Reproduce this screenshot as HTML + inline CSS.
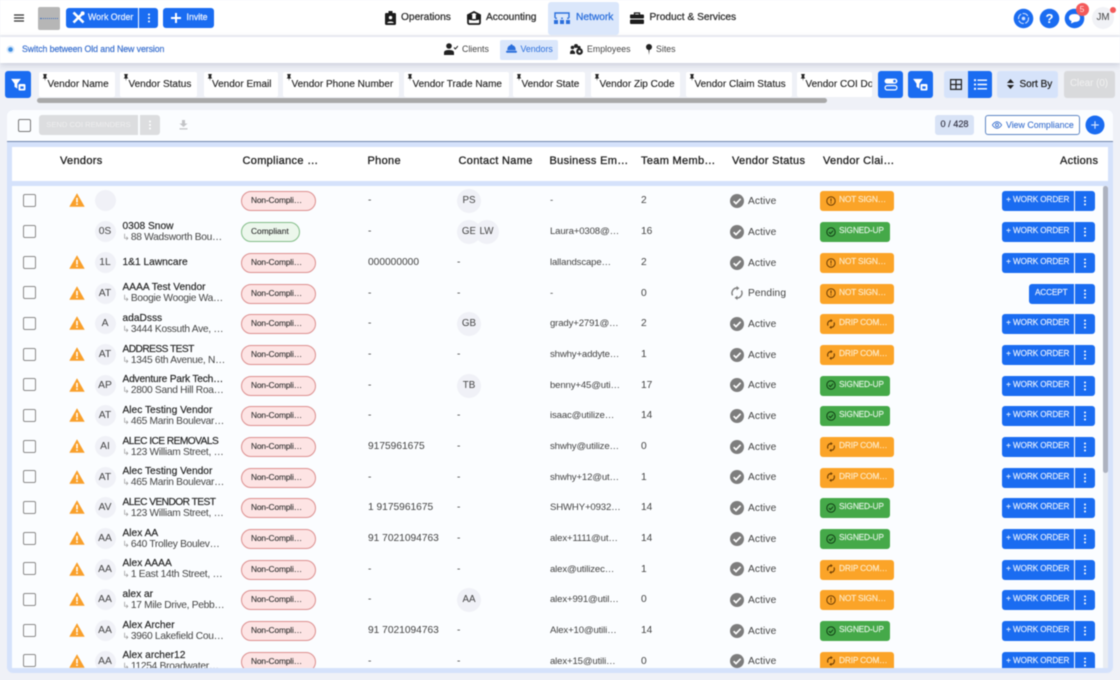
<!DOCTYPE html>
<html lang="en"><head><meta charset="utf-8"><title>Vendors</title>
<style>
*{box-sizing:border-box;margin:0;padding:0}
html,body{width:1120px;height:680px;overflow:hidden;background:#eff1f7;font-family:"Liberation Sans",Arial,sans-serif;color:#333}
#p{position:relative;width:1120px;height:680px;overflow:hidden;filter:blur(.4px)}
.a,.a *{position:absolute}
.a{left:0;top:0}
.t{white-space:nowrap;position:absolute}
.m{-webkit-text-stroke:.22px currentColor}
svg{display:block;position:absolute}
.b{background:#1a6cf1;border-radius:3px;position:absolute}
.n{font-size:10.2px;line-height:14px;top:10.5px;color:#2c2c2c;-webkit-text-stroke:.25px currentColor}
.s{font-size:8.8px;line-height:12px;top:43px;color:#444}
.c{position:absolute;top:72px;height:25px;background:#fff;border-radius:2px}
.c span{position:absolute;top:6px;left:8.5px;font-size:10px;line-height:14px;white-space:nowrap;color:#222;-webkit-text-stroke:.12px #222}
.c svg{left:3px;top:2px}
.h{position:absolute;top:154px;font-size:11px;line-height:14px;color:#1e1e1e;letter-spacing:.32px;-webkit-text-stroke:.3px #1e1e1e;white-space:nowrap}
.r{position:absolute;left:0;width:1120px;height:30px}
.r>*{position:absolute}
.k{left:23px;top:8.5px;width:13px;height:13px;border:1.5px solid #8b8b8b;border-radius:2px}
.w{left:69px;top:8px}
.v{left:94.5px;top:5px;width:21px;height:21px;border-radius:50%;background:#f0f1f7;font-size:10.3px;line-height:21px;text-align:center;color:#444}
.na{left:122.5px;top:3.5px;font-size:10.2px;line-height:13px;color:#222;white-space:nowrap;-webkit-text-stroke:.15px #222}
.u{letter-spacing:-.55px}
.ad{left:122.5px;top:14.5px;font-size:10.2px;line-height:13px;color:#444;white-space:nowrap;letter-spacing:-.28px}
.ad i{font-style:normal;color:#999;font-size:8.5px;margin-right:1.5px}
.o{left:122.5px;top:9px;font-size:10.2px;line-height:13px;color:#222;white-space:nowrap;-webkit-text-stroke:.15px #222}
.pl{left:241px;top:6px;height:20px;border-radius:10px;font-size:8.4px;line-height:16px;padding-left:9px;white-space:nowrap;color:#333;letter-spacing:-.15px;-webkit-text-stroke:.12px #333}
.no{width:75px;background:#fde4e4;border:1px solid #dc8f8f}
.ok{width:58.5px;background:#ecf7ec;border:1px solid #83bd88;letter-spacing:0}
.x{font-size:10.2px;line-height:30px;top:1px;color:#444;white-space:nowrap}
.e{left:550px;font-size:9.6px;letter-spacing:-.15px}
.cv{left:457px;top:4px;width:24px;height:24px;border-radius:50%;background:#f0f1f7;font-size:9.8px;line-height:24px;text-align:center;color:#444}
.si{left:730px;top:8.7px}
.st{left:748px;top:1.5px;font-size:10.2px;line-height:30px;color:#444;letter-spacing:.1px}
.cl{left:820px;top:6px;height:20px;border-radius:3px;width:74px;color:#fdeccd;font-size:8.4px;line-height:17px;padding-left:19px;white-space:nowrap;letter-spacing:-.2px;-webkit-text-stroke:.15px currentColor}
.cl svg{left:6px;top:4.5px}
.or{background:#fba428}
.gr{background:#45a949;width:69.5px;color:#e4f4e5}
.wo{left:1002px;top:6px;width:71.5px;height:20px;background:#1a6cf1;color:#e8f0ff;border-radius:3px 0 0 3px;font-size:8.2px;line-height:17px;text-align:center;white-space:nowrap;letter-spacing:-.1px;-webkit-text-stroke:.15px currentColor}
.ac{left:1029px;width:44.5px}
.mo{left:1075px;top:6px;width:19.5px;height:20px;background:#1a6cf1;border-radius:0 3px 3px 0}
.mo:after,.dot:after{content:"";position:absolute;left:50%;top:50%;width:2px;height:2px;margin:-1px;border-radius:50%;background:#fff;box-shadow:0 -3.5px #fff,0 3.5px #fff}
</style></head><body><div id="p">
<svg width="0" height="0" style="position:absolute"><defs>
<symbol id="warn" viewBox="0 0 16 14"><path d="M8 0.3 15.7 13.7H.3z" fill="#f9a02b"/><rect x="7.2" y="4.8" width="1.6" height="4.6" fill="#fff"/><rect x="7.2" y="10.3" width="1.6" height="1.6" fill="#fff"/></symbol>
<symbol id="act" viewBox="0 0 14 14"><circle cx="7" cy="7" r="7" fill="#7d7d7d"/><path d="M3.6 7.2 6 9.6 10.6 4.8" fill="none" stroke="#fff" stroke-width="1.6"/></symbol>
<symbol id="pend" viewBox="0 0 14 14"><path d="M7 2A5 5 0 0 0 2.6 9.4M7 12A5 5 0 0 0 11.4 4.6" fill="none" stroke="#7d7d7d" stroke-width="1.4"/><path d="M6.6 0 9.4 2.2 6.6 4.4zM7.4 14 4.6 11.8 7.4 9.6z" fill="#7d7d7d"/></symbol>
<symbol id="nots" viewBox="0 0 10 10"><circle cx="5" cy="5" r="4.2" fill="none" stroke="#6b3d05" stroke-width="1"/><rect x="4.5" y="2.4" width="1" height="3.2" fill="#6b3d05"/><rect x="4.5" y="6.3" width="1" height="1.1" fill="#6b3d05"/></symbol>
<symbol id="drip" viewBox="0 0 10 10"><path d="M5 1.6A3.4 3.4 0 0 0 2 6.6M5 8.4A3.4 3.4 0 0 0 8 3.4" fill="none" stroke="#6b3d05" stroke-width="1.1"/><path d="M4.6 0 6.8 1.6 4.6 3.2zM5.4 10 3.2 8.4 5.4 6.8z" fill="#6b3d05"/></symbol>
<symbol id="sign" viewBox="0 0 10 10"><circle cx="5" cy="5" r="4.2" fill="none" stroke="#123f16" stroke-width="1"/><path d="M2.9 5.1 4.4 6.6 7.2 3.7" fill="none" stroke="#123f16" stroke-width="1"/></symbol>
<symbol id="pin" viewBox="0 0 6 7"><path d="M1.2 0H4.8V.8L4.3 1.2V3.4L5.4 4.5H3.4L3 7 2.6 4.5H.6L1.7 3.4V1.2L1.2.8z" fill="#222"/></symbol>
<symbol id="fil" viewBox="0 0 16 14"><path d="M0 1H10.5L6.8 6V11.5L3.7 9.5V6z" fill="#fff"/><rect x="8" y="6.5" width="7.5" height="7" rx="1.3" fill="#fff"/><rect x="10" y="9" width="3.5" height="2.6" fill="#1a6cf1"/></symbol>
</defs></svg>

<!-- top bar -->
<div class="a" style="width:1120px;height:36px;background:#fff;border-bottom:1px solid #eceef2"></div>
<div class="a" style="top:37px;width:1120px;height:26px;background:#fff;box-shadow:0 2px 6px rgba(90,100,130,.25)"></div>
<svg style="left:14px;top:14px" width="10" height="8"><path d="M0 1H10M0 4H10M0 7H10" stroke="#333" stroke-width="1.2"/></svg>
<div style="position:absolute;left:38px;top:7px;width:22px;height:22.5px;background:#b6b6b6;border-radius:2px"><div style="position:absolute;left:2px;top:10.5px;width:18px;height:1px;border-top:1px dotted #3e6fc0"></div></div>
<div class="b" style="left:66px;top:8px;width:72px;height:20px;border-radius:3px 0 0 3px"></div>
<svg style="left:72px;top:11px" width="13" height="13" viewBox="0 0 13 13"><path d="M1.5 1.5 11.5 11.5M11.5 1.5 1.5 11.5" stroke="#fff" stroke-width="2.6"/><circle cx="10.6" cy="2.4" r="2" fill="#fff"/></svg>
<div class="t m" style="left:88px;top:11px;font-size:8.8px;line-height:13px;color:#eaf1ff">Work Order</div>
<div class="b dot" style="left:139px;top:8px;width:19px;height:20px;border-radius:0 3px 3px 0"></div>
<div class="b" style="left:163px;top:8px;width:51px;height:20px"></div>
<svg style="left:171px;top:13px" width="10" height="10"><path d="M5 0V10M0 5H10" stroke="#fff" stroke-width="2"/></svg>
<div class="t m" style="left:186.5px;top:11px;font-size:8.8px;line-height:13px;color:#eaf1ff">Invite</div>

<svg style="left:385px;top:11px" width="11" height="14" viewBox="0 0 11 14"><rect y="2" width="11" height="12" rx="1.2" fill="#1c1c1c"/><rect x="3.5" y="0" width="4" height="3.5" fill="#1c1c1c"/><circle cx="5.5" cy="6.6" r="1.7" fill="#fff"/><path d="M2.3 12c0-2 6.4-2 6.4 0z" fill="#fff"/></svg>
<div class="t n" style="left:401px">Operations</div>
<svg style="left:466.5px;top:11px" width="14" height="14" viewBox="0 0 14 14"><path d="M1 4 7 1 13 4V11.5Q13 13 11.5 13H2.500Q1 13 1 11.500z" fill="none" stroke="#1c1c1c" stroke-width="1.8"/><path d="M0 3.500H14V8Q7 11 0 8z" fill="#1c1c1c"/><rect x="5.200" y="3.500" width="3.600" height="4.500" fill="#fff"/></svg>
<div class="t n" style="left:486px">Accounting</div>
<div style="position:absolute;left:548px;top:2px;width:71px;height:33px;background:#dbe7fb;border-radius:3px"></div>
<svg style="left:554px;top:12px" width="16" height="12" viewBox="0 0 16 12"><path d="M1 6V1H15V6" fill="none" stroke="#2b6fdc" stroke-width="1.400"/><g fill="#2b6fdc"><rect x="0" y="8" width="4" height="4"/><rect x="6" y="8" width="4" height="4"/><rect x="12" y="8" width="4" height="4"/><rect x="1.200" y="5.500" width="1.600" height="1.600"/><rect x="7.200" y="5.500" width="1.600" height="1.600"/><rect x="13.200" y="5.500" width="1.600" height="1.600"/></g></svg>
<div class="t n" style="left:576px;color:#2b6fdc">Network</div>
<svg style="left:630px;top:12px" width="14" height="12" viewBox="0 0 14 12"><path d="M4.500 3V1H9.500V3" fill="none" stroke="#1c1c1c" stroke-width="1.300"/><rect y="2.500" width="14" height="4" rx="1" fill="#1c1c1c"/><rect y="7.500" width="14" height="4.500" rx="1" fill="#1c1c1c"/></svg>
<div class="t n" style="left:649.500px">Product &amp; Services</div>

<svg style="left:1013px;top:8px" width="21" height="21" viewBox="0 0 21 21"><circle cx="10.500" cy="10.500" r="9.800" fill="#1a6cf1"/><circle cx="10.500" cy="10.500" r="5" fill="none" stroke="#cfe0ff" stroke-width="1.100" stroke-dasharray="6 1.500"/><circle cx="10.500" cy="10.500" r="1.800" fill="#cfe0ff"/></svg>
<svg style="left:1039px;top:8px" width="21" height="21" viewBox="0 0 21 21"><circle cx="10.500" cy="10.500" r="9.800" fill="#1a6cf1"/></svg>
<div class="t" style="left:1039px;top:10px;width:21px;text-align:center;color:#fff;font-size:13px;line-height:17px;font-weight:bold">?</div>
<svg style="left:1064px;top:8px" width="21" height="21" viewBox="0 0 21 21"><circle cx="10.500" cy="10.500" r="9.800" fill="#1a6cf1"/><path d="M5 10Q5 6 10.500 6T16 10 10.500 14L7 15.500 7.500 13Q5 12 5 10z" fill="#fff"/></svg>
<div style="position:absolute;left:1075.500px;top:3px;width:13px;height:13px;border-radius:50%;background:#f45a5a;color:#ffe3e3;font-size:8.500px;line-height:13px;text-align:center">5</div>
<div style="position:absolute;left:1092px;top:7px;width:22px;height:22px;border-radius:50%;background:#f1f2f6;color:#444;font-size:9.800px;line-height:22px;text-align:center">JM</div>
<div style="position:absolute;left:1109.500px;top:6.500px;width:6px;height:6px;border-radius:50%;background:#f45a5a"></div>

<!-- sub bar -->
<svg style="left:6px;top:44.500px" width="9" height="9"><circle cx="4.500" cy="4.500" r="4" fill="#d5e6fb"/><circle cx="4.500" cy="4.500" r="2.300" fill="#3f8ee0"/></svg>
<div class="t s m" style="left:22px;color:#3f74d0;letter-spacing:-.1px">Switch between Old and New version</div>
<svg style="left:444px;top:43px" width="14" height="12" viewBox="0 0 14 12"><circle cx="5" cy="3" r="2.800" fill="#222"/><path d="M0 12V9.500Q0 7 5 7T10 9.500V12z" fill="#222"/><path d="M10 4.500 11.300 6 14 3" fill="none" stroke="#222" stroke-width="1"/></svg>
<div class="t s" style="left:462px">Clients</div>
<div style="position:absolute;left:500px;top:39.500px;width:58px;height:20.500px;background:#dbe7fb;border-radius:2px"></div>
<svg style="left:506px;top:44px" width="11" height="9" viewBox="0 0 11 9"><path d="M1.300 6.200Q1.300 1.800 4.600 1.200V.4H6.400V1.200Q9.700 1.800 9.700 6.200z" fill="#2b6fdc"/><rect y="6.700" width="11" height="2" rx="1" fill="#2b6fdc"/></svg>
<div class="t s" style="left:520.500px;color:#2b6fdc">Vendors</div>
<svg style="left:569.500px;top:43.500px" width="14" height="11" viewBox="0 0 14 11"><g fill="#222"><circle cx="2.500" cy="3.500" r="1.800"/><circle cx="6" cy="2" r="2"/><circle cx="9" cy="3.500" r="1.600"/><path d="M0 9Q0 6 3 6L5 8V10H0z"/><circle cx="9.500" cy="7.500" r="3.400"/></g><circle cx="9.500" cy="7.500" r="1.200" fill="#fff"/></svg>
<div class="t s" style="left:587px">Employees</div>
<svg style="left:646px;top:43.500px" width="6" height="11" viewBox="0 0 6 11"><circle cx="3" cy="3" r="3" fill="#222"/><path d="M2.400 5H3.600L3 11z" fill="#222"/></svg>
<div class="t s" style="left:656px">Sites</div>

<!-- filter row -->
<div class="b" style="left:5px;top:71px;width:26px;height:26.500px"></div>
<svg style="left:11px;top:77.500px" width="15" height="13"><use href="#fil"/></svg>
<div class="c" style="left:39px;width:76px"><svg width="6" height="7"><use href="#pin"/></svg><span>Vendor Name</span></div>
<div class="c" style="left:120px;width:77px"><svg width="6" height="7"><use href="#pin"/></svg><span>Vendor Status</span></div>
<div class="c" style="left:203.500px;width:74px"><svg width="6" height="7"><use href="#pin"/></svg><span>Vendor Email</span></div>
<div class="c" style="left:283px;width:116px"><svg width="6" height="7"><use href="#pin"/></svg><span>Vendor Phone Number</span></div>
<div class="c" style="left:404px;width:105px"><svg width="6" height="7"><use href="#pin"/></svg><span>Vendor Trade Name</span></div>
<div class="c" style="left:513px;width:72px"><svg width="6" height="7"><use href="#pin"/></svg><span>Vendor State</span></div>
<div class="c" style="left:591px;width:89px"><svg width="6" height="7"><use href="#pin"/></svg><span>Vendor Zip Code</span></div>
<div class="c" style="left:686px;width:106px"><svg width="6" height="7"><use href="#pin"/></svg><span>Vendor Claim Status</span></div>
<div class="c" style="left:797px;width:75px;overflow:hidden"><svg width="6" height="7"><use href="#pin"/></svg><span>Vendor COI Document</span></div>
<div style="position:absolute;left:37px;top:98px;width:790px;height:5px;border-radius:3px;background:#a9a9a9"></div>
<div class="b" style="left:878px;top:71px;width:24.500px;height:26.500px"></div>
<svg style="left:883.500px;top:77.500px" width="14" height="13" viewBox="0 0 14 13"><rect x=".6" y=".6" width="12.800" height="5" rx="2.500" fill="#fff"/><circle cx="10.500" cy="3.100" r="1.300" fill="#1a6cf1"/><rect x="1.100" y="7.600" width="11.800" height="4.300" rx="2.100" fill="none" stroke="#fff" stroke-width="1.200"/></svg>
<div class="b" style="left:908px;top:71px;width:24.500px;height:26.500px"></div>
<svg style="left:913px;top:77.500px" width="15" height="13"><use href="#fil"/></svg>
<div style="position:absolute;left:944px;top:71px;width:48px;height:26.500px;background:#d6e3fa;border-radius:3px"></div>
<svg style="left:950px;top:78.500px" width="12" height="11" viewBox="0 0 12 11"><path d="M.6.600H11.400V10.400H.6zM.6 5.500H11.400M6 .6V10.400" fill="none" stroke="#222" stroke-width="1.200"/></svg>
<div style="position:absolute;left:967.500px;top:71px;width:24px;height:26.500px;background:#1a6cf1;border-radius:0 3px 3px 0"></div>
<svg style="left:973.500px;top:78.500px" width="13" height="11" viewBox="0 0 13 11"><path d="M3.500 1.200H13M3.500 5.500H13M3.500 9.800H13" stroke="#fff" stroke-width="1.400"/><path d="M0 1.200H2M0 5.500H2M0 9.800H2" stroke="#fff" stroke-width="1.800"/></svg>
<div style="position:absolute;left:997px;top:71px;width:61px;height:26.500px;background:#d6e3fa;border-radius:3px"></div>
<svg style="left:1006.500px;top:79px" width="7" height="10" viewBox="0 0 7 10"><path d="M3.500 0 7 4H0zM3.500 10 0 6H7z" fill="#222"/></svg>
<div class="t m" style="left:1019.500px;top:77.500px;font-size:10px;line-height:14px;color:#222">Sort By</div>
<div style="position:absolute;left:1063.500px;top:71px;width:51px;height:26.500px;background:#d9dadc;border-radius:3px;color:#f1f1f1;font-size:9.800px;line-height:26.500px;text-align:center">Clear (0)</div>

<!-- card -->
<div style="position:absolute;left:7px;top:110px;width:1106px;height:563px;background:#d5e2fb;border-radius:6px"></div>
<div style="position:absolute;left:7px;top:110px;width:1106px;height:31.500px;background:#fbfdff;border-radius:6px 6px 0 0;border-bottom:1px solid #7186ab"></div>
<div style="position:absolute;left:17.500px;top:118.500px;width:13px;height:13px;border:1.500px solid #777;border-radius:2px"></div>
<div style="position:absolute;left:39px;top:115px;width:99px;height:20px;background:#dcdddf;border-radius:3px 0 0 3px;color:#eeeeef;font-size:7.600px;line-height:19px;text-align:center;white-space:nowrap">SEND COI REMINDERS</div>
<div class="dot" style="position:absolute;left:139.500px;top:115px;width:20px;height:20px;background:#dcdddf;border-radius:0 3px 3px 0"></div>
<svg style="left:179px;top:120px" width="9" height="10" viewBox="0 0 9 10"><path d="M3 0H6V3.500H8.500L4.500 7 .5 3.500H3zM.5 8.200H8.500V9.500H.5z" fill="#c3c4c7"/></svg>
<div style="position:absolute;left:935px;top:115px;width:39px;height:20px;background:#d8e3f6;border-radius:3px;color:#334;font-size:9.200px;line-height:19px;text-align:center;-webkit-text-stroke:.15px #334">0 / 428</div>
<div style="position:absolute;left:985px;top:115px;width:95px;height:20px;border:1px solid #5f86c4;border-radius:3px;background:#fff"></div>
<svg style="left:992px;top:121px" width="10" height="8" viewBox="0 0 10 8"><path d="M.3 4Q5-2.500 9.700 4 5 10.500.3 4z" fill="none" stroke="#3f74d0" stroke-width=".9"/><circle cx="5" cy="4" r="1.500" fill="none" stroke="#3f74d0" stroke-width=".9"/></svg>
<div class="t" style="left:1006px;top:118.500px;font-size:8.800px;line-height:12px;color:#3f74d0;-webkit-text-stroke:.12px #3f74d0">View Compliance</div>
<svg style="left:1085px;top:115px" width="20" height="20"><circle cx="10" cy="10" r="9.500" fill="#1a6cf1"/><path d="M10 6.200V13.800M6.200 10H13.800" stroke="#cfe0ff" stroke-width="1.200"/></svg>

<div style="position:absolute;left:12px;top:147px;width:1096px;height:33.500px;background:#fff"></div>
<div class="h" style="left:60px">Vendors</div>
<div class="h" style="left:242.500px">Compliance …</div>
<div class="h" style="left:367.500px">Phone</div>
<div class="h" style="left:458.500px">Contact Name</div>
<div class="h" style="left:549.500px">Business Em…</div>
<div class="h" style="left:641px">Team Memb…</div>
<div class="h" style="left:732px">Vendor Status</div>
<div class="h" style="left:823px">Vendor Clai…</div>
<div class="h" style="left:1060px">Actions</div>

<div style="position:absolute;left:12px;top:186px;width:1096px;height:482px;background:#fbfdff"></div>
<div style="position:absolute;left:1103px;top:186px;width:5px;height:482px;background:#e9ecf2"></div>
<div style="position:absolute;left:1103px;top:186px;width:5px;height:287px;background:#adb2bf;border-radius:3px"></div>

<div style="position:absolute;left:0;top:0;width:1103px;height:668px;overflow:hidden">
<div class="r" style="top:185px"><div class="k"></div><svg class="w" width="16" height="14"><use href="#warn"/></svg><div class="v"></div><div class="pl no">Non-Compli…</div><div class="x" style="left:368px">-</div><div class="cv">PS</div><div class="x e">-</div><div class="x" style="left:641px">2</div><svg class="si" width="14" height="14"><use href="#act"/></svg><div class="st">Active</div><div class="cl or"><svg width="10" height="10"><use href="#nots"/></svg>NOT SIGN…</div><div class="wo">+ WORK ORDER</div><div class="mo"></div></div>
<div class="r" style="top:216px"><div class="k"></div><div class="v">0S</div><div class="na">0308 Snow</div><div class="ad"><i>↳</i>88 Wadsworth Bou…</div><div class="pl ok">Compliant</div><div class="x" style="left:368px">-</div><div class="cv">GE</div><div class="cv" style="left:474.500px">LW</div><div class="x e">Laura+0308@…</div><div class="x" style="left:641px">16</div><svg class="si" width="14" height="14"><use href="#act"/></svg><div class="st">Active</div><div class="cl gr"><svg width="10" height="10"><use href="#sign"/></svg>SIGNED-UP</div><div class="wo">+ WORK ORDER</div><div class="mo"></div></div>
<div class="r" style="top:247px"><div class="k"></div><svg class="w" width="16" height="14"><use href="#warn"/></svg><div class="v">1L</div><div class="o">1&amp;1 Lawncare</div><div class="pl no">Non-Compli…</div><div class="x" style="left:368px">000000000</div><div class="x" style="left:457px">-</div><div class="x e">lallandscape…</div><div class="x" style="left:641px">2</div><svg class="si" width="14" height="14"><use href="#act"/></svg><div class="st">Active</div><div class="cl or"><svg width="10" height="10"><use href="#nots"/></svg>NOT SIGN…</div><div class="wo">+ WORK ORDER</div><div class="mo"></div></div>
<div class="r" style="top:277.500px"><div class="k"></div><svg class="w" width="16" height="14"><use href="#warn"/></svg><div class="v">AT</div><div class="na">AAAA Test Vendor</div><div class="ad"><i>↳</i>Boogie Woogie Wa…</div><div class="pl no">Non-Compli…</div><div class="x" style="left:368px">-</div><div class="x" style="left:457px">-</div><div class="x e">-</div><div class="x" style="left:641px">0</div><svg class="si" width="14" height="14"><use href="#pend"/></svg><div class="st">Pending</div><div class="cl or"><svg width="10" height="10"><use href="#nots"/></svg>NOT SIGN…</div><div class="wo ac">ACCEPT</div><div class="mo"></div></div>
<div class="r" style="top:308px"><div class="k"></div><svg class="w" width="16" height="14"><use href="#warn"/></svg><div class="v">A</div><div class="na">adaDsss</div><div class="ad"><i>↳</i>3444 Kossuth Ave, …</div><div class="pl no">Non-Compli…</div><div class="x" style="left:368px">-</div><div class="cv">GB</div><div class="x e">grady+2791@…</div><div class="x" style="left:641px">2</div><svg class="si" width="14" height="14"><use href="#act"/></svg><div class="st">Active</div><div class="cl or"><svg width="10" height="10"><use href="#drip"/></svg>DRIP COM…</div><div class="wo">+ WORK ORDER</div><div class="mo"></div></div>
<div class="r" style="top:339px"><div class="k"></div><svg class="w" width="16" height="14"><use href="#warn"/></svg><div class="v">AT</div><div class="na u">ADDRESS TEST</div><div class="ad"><i>↳</i>1345 6th Avenue, N…</div><div class="pl no">Non-Compli…</div><div class="x" style="left:368px">-</div><div class="x" style="left:457px">-</div><div class="x e">shwhy+addyte…</div><div class="x" style="left:641px">1</div><svg class="si" width="14" height="14"><use href="#act"/></svg><div class="st">Active</div><div class="cl or"><svg width="10" height="10"><use href="#drip"/></svg>DRIP COM…</div><div class="wo">+ WORK ORDER</div><div class="mo"></div></div>
<div class="r" style="top:369.500px"><div class="k"></div><svg class="w" width="16" height="14"><use href="#warn"/></svg><div class="v">AP</div><div class="na" style="letter-spacing:-.2px">Adventure Park Tech…</div><div class="ad"><i>↳</i>2800 Sand Hill Roa…</div><div class="pl no">Non-Compli…</div><div class="x" style="left:368px">-</div><div class="cv">TB</div><div class="x e">benny+45@uti…</div><div class="x" style="left:641px">17</div><svg class="si" width="14" height="14"><use href="#act"/></svg><div class="st">Active</div><div class="cl gr"><svg width="10" height="10"><use href="#sign"/></svg>SIGNED-UP</div><div class="wo">+ WORK ORDER</div><div class="mo"></div></div>
<div class="r" style="top:400px"><div class="k"></div><svg class="w" width="16" height="14"><use href="#warn"/></svg><div class="v">AT</div><div class="na">Alec Testing Vendor</div><div class="ad"><i>↳</i>465 Marin Boulevar…</div><div class="pl no">Non-Compli…</div><div class="x" style="left:368px">-</div><div class="x" style="left:457px">-</div><div class="x e">isaac@utilize…</div><div class="x" style="left:641px">14</div><svg class="si" width="14" height="14"><use href="#act"/></svg><div class="st">Active</div><div class="cl gr"><svg width="10" height="10"><use href="#sign"/></svg>SIGNED-UP</div><div class="wo">+ WORK ORDER</div><div class="mo"></div></div>
<div class="r" style="top:431px"><div class="k"></div><svg class="w" width="16" height="14"><use href="#warn"/></svg><div class="v">AI</div><div class="na u">ALEC ICE REMOVALS</div><div class="ad"><i>↳</i>123 William Street, …</div><div class="pl no">Non-Compli…</div><div class="x" style="left:368px">9175961675</div><div class="x" style="left:457px">-</div><div class="x e">shwhy@utilize…</div><div class="x" style="left:641px">0</div><svg class="si" width="14" height="14"><use href="#act"/></svg><div class="st">Active</div><div class="cl or"><svg width="10" height="10"><use href="#drip"/></svg>DRIP COM…</div><div class="wo">+ WORK ORDER</div><div class="mo"></div></div>
<div class="r" style="top:461.500px"><div class="k"></div><svg class="w" width="16" height="14"><use href="#warn"/></svg><div class="v">AT</div><div class="na">Alec Testing Vendor</div><div class="ad"><i>↳</i>465 Marin Boulevar…</div><div class="pl no">Non-Compli…</div><div class="x" style="left:368px">-</div><div class="x" style="left:457px">-</div><div class="x e">shwhy+12@ut…</div><div class="x" style="left:641px">1</div><svg class="si" width="14" height="14"><use href="#act"/></svg><div class="st">Active</div><div class="cl or"><svg width="10" height="10"><use href="#drip"/></svg>DRIP COM…</div><div class="wo">+ WORK ORDER</div><div class="mo"></div></div>
<div class="r" style="top:492px"><div class="k"></div><svg class="w" width="16" height="14"><use href="#warn"/></svg><div class="v">AV</div><div class="na u">ALEC VENDOR TEST</div><div class="ad"><i>↳</i>123 William Street, …</div><div class="pl no">Non-Compli…</div><div class="x" style="left:368px">1 9175961675</div><div class="x" style="left:457px">-</div><div class="x e">SHWHY+0932…</div><div class="x" style="left:641px">14</div><svg class="si" width="14" height="14"><use href="#act"/></svg><div class="st">Active</div><div class="cl gr"><svg width="10" height="10"><use href="#sign"/></svg>SIGNED-UP</div><div class="wo">+ WORK ORDER</div><div class="mo"></div></div>
<div class="r" style="top:523px"><div class="k"></div><svg class="w" width="16" height="14"><use href="#warn"/></svg><div class="v">AA</div><div class="na">Alex AA</div><div class="ad"><i>↳</i>640 Trolley Boulev…</div><div class="pl no">Non-Compli…</div><div class="x" style="left:368px">91 7021094763</div><div class="x" style="left:457px">-</div><div class="x e">alex+1111@ut…</div><div class="x" style="left:641px">14</div><svg class="si" width="14" height="14"><use href="#act"/></svg><div class="st">Active</div><div class="cl gr"><svg width="10" height="10"><use href="#sign"/></svg>SIGNED-UP</div><div class="wo">+ WORK ORDER</div><div class="mo"></div></div>
<div class="r" style="top:553.500px"><div class="k"></div><svg class="w" width="16" height="14"><use href="#warn"/></svg><div class="v">AA</div><div class="na">Alex AAAA</div><div class="ad"><i>↳</i>1 East 14th Street, …</div><div class="pl no">Non-Compli…</div><div class="x" style="left:368px">-</div><div class="x" style="left:457px">-</div><div class="x e">alex@utilizec…</div><div class="x" style="left:641px">1</div><svg class="si" width="14" height="14"><use href="#act"/></svg><div class="st">Active</div><div class="cl or"><svg width="10" height="10"><use href="#drip"/></svg>DRIP COM…</div><div class="wo">+ WORK ORDER</div><div class="mo"></div></div>
<div class="r" style="top:584px"><div class="k"></div><svg class="w" width="16" height="14"><use href="#warn"/></svg><div class="v">AA</div><div class="na">alex ar</div><div class="ad"><i>↳</i>17 Mile Drive, Pebb…</div><div class="pl no">Non-Compli…</div><div class="x" style="left:368px">-</div><div class="cv">AA</div><div class="x e">alex+991@util…</div><div class="x" style="left:641px">0</div><svg class="si" width="14" height="14"><use href="#act"/></svg><div class="st">Active</div><div class="cl or"><svg width="10" height="10"><use href="#nots"/></svg>NOT SIGN…</div><div class="wo">+ WORK ORDER</div><div class="mo"></div></div>
<div class="r" style="top:615px"><div class="k"></div><svg class="w" width="16" height="14"><use href="#warn"/></svg><div class="v">AA</div><div class="na">Alex Archer</div><div class="ad"><i>↳</i>3960 Lakefield Cou…</div><div class="pl no">Non-Compli…</div><div class="x" style="left:368px">91 7021094763</div><div class="x" style="left:457px">-</div><div class="x e">Alex+10@utili…</div><div class="x" style="left:641px">14</div><svg class="si" width="14" height="14"><use href="#act"/></svg><div class="st">Active</div><div class="cl gr"><svg width="10" height="10"><use href="#sign"/></svg>SIGNED-UP</div><div class="wo">+ WORK ORDER</div><div class="mo"></div></div>
<div class="r" style="top:645.500px"><div class="k"></div><svg class="w" width="16" height="14"><use href="#warn"/></svg><div class="v">AA</div><div class="na">Alex archer12</div><div class="ad"><i>↳</i>11254 Broadwater…</div><div class="pl no">Non-Compli…</div><div class="x" style="left:368px">-</div><div class="x" style="left:457px">-</div><div class="x e">alex+15@utili…</div><div class="x" style="left:641px">0</div><svg class="si" width="14" height="14"><use href="#act"/></svg><div class="st">Active</div><div class="cl or"><svg width="10" height="10"><use href="#drip"/></svg>DRIP COM…</div><div class="wo">+ WORK ORDER</div><div class="mo"></div></div>
</div>
</div></body></html>
